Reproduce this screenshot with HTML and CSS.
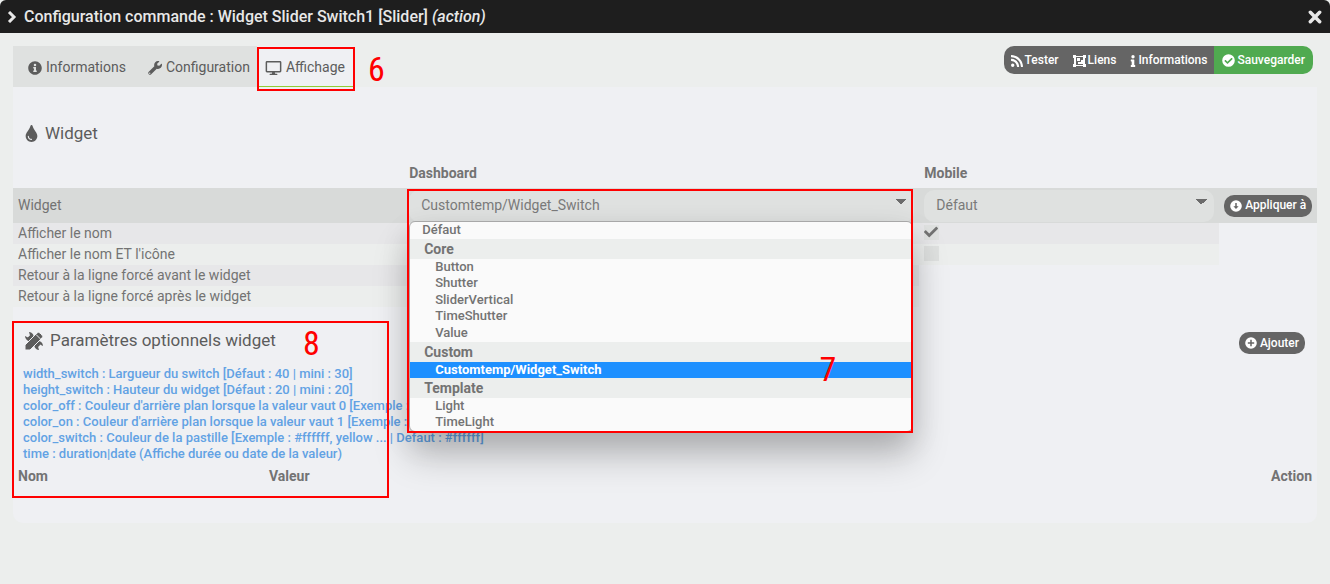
FILE: index.html
```html
<!DOCTYPE html>
<html lang="fr">
<head>
<meta charset="utf-8">
<title>Configuration commande</title>
<link rel="stylesheet" href="styles.css">
</head>
<body>
<svg class="sprite" aria-hidden="true">
  <symbol id="i-info-circle" viewBox="0 0 512 512"><path d="M256 8C119 8 8 119 8 256s111 248 248 248 248-111 248-248S393 8 256 8zm0 90a46 46 0 1 1 0 92 46 46 0 0 1 0-92zm64 294c0 7-5 12-12 12h-104c-7 0-12-5-12-12v-32c0-7 5-12 12-12h16v-76h-16c-7 0-12-5-12-12v-32c0-7 5-12 12-12h76c7 0 12 5 12 12v120h16c7 0 12 5 12 12z"/></symbol>
  <symbol id="i-wrench" viewBox="0 0 512 512"><path d="M508 109c-2-9-14-12-20-5l-75 74-67-11-12-68 75-74c7-7 4-18-6-21-48-12-100 1-137 38-40 40-51 98-34 148L19 404a65 65 0 0 0 89 89l213-213c50 18 108 6 148-34 38-37 51-90 39-137zM64 472a24 24 0 1 1 0-48 24 24 0 0 1 0 48z"/></symbol>
  <symbol id="i-screen" viewBox="0 0 576 512"><path d="M528 0H48C22 0 0 22 0 48v320c0 26 22 48 48 48h192l-16 48h-62c-12 0-20 10-20 24s8 24 20 24h252c12 0 20-10 20-24s-8-24-20-24h-62l-16-48h192c26 0 48-22 48-48V48c0-26-22-48-48-48zm-6 362H54V54h468v308z"/></symbol>
  <symbol id="i-drop" viewBox="0 0 352 512"><path d="M206 22c-9-30-50-30-59 0C100 179 0 222 0 334c0 99 79 178 176 178s176-79 176-178C352 221 252 180 206 22zM176 448c-62 0-112-50-112-112a16 16 0 0 1 32 0c0 44 36 80 80 80a16 16 0 0 1 0 32z"/></symbol>
  <symbol id="i-rss" viewBox="0 0 448 448"><path d="M128 384a64 64 0 1 1-128 0 64 64 0 0 1 128 0zm176 47C295 274 175 153 17 144c-9 0-17 7-17 16v48c0 8 7 15 15 16 111 7 201 95 208 209 1 8 8 15 16 15h49c9 0 16-8 16-17zm144 0C439 198 252 9 17 0 8 0 0 7 0 16v48c0 9 7 16 15 16 190 8 345 161 353 353 0 8 7 15 16 15h48c9 0 16-8 16-17z"/></symbol>
  <symbol id="i-group" viewBox="0 0 13 13"><path fill-rule="evenodd" d="M0 1h3v1h7V1h3v3h-1v6h1v3h-3v-1H3v1H0v-3h1V4H0zm3 2v8h7V3z"/><path d="M4 4h3v3H4zM8 6h2v4H5V8h3z"/></symbol>
  <symbol id="i-info" viewBox="0 0 192 512"><path d="M20 424h20V280H20c-11 0-20-9-20-20v-48c0-11 9-20 20-20h112c11 0 20 9 20 20v212h20c11 0 20 9 20 20v48c0 11-9 20-20 20H20c-11 0-20-9-20-20v-48c0-11 9-20 20-20zM96 0a72 72 0 1 1 0 144A72 72 0 0 1 96 0z"/></symbol>
  <symbol id="i-check-circle" viewBox="0 0 512 512"><path d="M504 256a248 248 0 1 1-496 0 248 248 0 0 1 496 0zM227 387l184-184c7-6 7-16 0-22l-22-23c-7-6-17-6-23 0L216 308l-70-70c-6-6-16-6-23 0l-22 23c-7 6-7 16 0 22l104 104c6 7 16 7 22 0z"/></symbol>
  <symbol id="i-arrow-circle" viewBox="0 0 512 512"><path fill-rule="evenodd" d="M256 8a248 248 0 1 1 0 496 248 248 0 0 1 0-496zM224 130v140h-80l112 116 112-116h-80V130z"/></symbol>
  <symbol id="i-plus-circle" viewBox="0 0 512 512"><path fill-rule="evenodd" d="M256 8a248 248 0 1 1 0 496 248 248 0 0 1 0-496zM224 120v104H120v64h104v104h64V288h104v-64H288V120z"/></symbol>
  <symbol id="i-tools" viewBox="0 0 18 18"><path fill="none" stroke="currentColor" stroke-width="4.400" d="m3.500 5 10 9.500"/><path d="M4 0a4.500 4.500 0 0 1 4.500 5.500L6 9A5 5 0 0 1 0 4l3 1.500L5 3.500zM14 18a4.500 4.500 0 0 1-4.500-5.500L12 9a5 5 0 0 1 6 5l-3-1.500-2 2z"/><path stroke="#eff0f3" stroke-width="1" d="M0 18v-5L12 1q1.500-1.500 3 0l2 2q1.500 1.500 0 3L5 18z"/><path stroke="#eff0f3" stroke-width="1" d="m11 2.500 4.500 4.500"/></symbol>
  <symbol id="i-check" viewBox="0 0 512 512"><path d="m174 439-166-166c-10-10-10-27 0-37l36-36c10-10 26-10 36 0l112 112 240-240c10-10 26-10 36 0l36 37c10 10 10 26 0 36L210 439c-10 10-26 10-36 0z"/></symbol>
  <symbol id="i-chevron" viewBox="0 0 10 12"><path fill="none" stroke="currentColor" stroke-width="3" d="m2 1 5 5-5 5"/></symbol>
  <symbol id="i-close" viewBox="0 0 12 12"><path fill="none" stroke="currentColor" stroke-width="3" stroke-linecap="round" d="m2 2 8 8m0-8-8 8"/></symbol>
</svg>

<header class="titlebar">
  <svg class="icon chevron"><use href="#i-chevron"/></svg>
  <h1 class="title">Configuration commande : Widget Slider Switch1 [Slider] <em>(action)</em></h1>
  <button class="close" type="button" aria-label="Fermer"><svg class="icon"><use href="#i-close"/></svg></button>
</header>

<main class="content">
  <div class="toolbar">
    <nav class="tabs">
      <a class="tab tab-first" href="#informations"><svg class="icon"><use href="#i-info-circle"/></svg>Informations</a>
      <a class="tab" href="#configuration"><svg class="icon"><use href="#i-wrench"/></svg>Configuration</a>
      <a class="tab active" href="#affichage" aria-current="page"><svg class="icon screen"><use href="#i-screen"/></svg>Affichage<span class="mark mark-tab"></span><span class="step step-tab">6</span></a>
    </nav>
    <div class="actions">
      <button class="action" type="button"><svg class="icon"><use href="#i-rss"/></svg>Tester</button>
      <button class="action" type="button"><svg class="icon wide"><use href="#i-group"/></svg>Liens</button>
      <button class="action" type="button"><svg class="icon thin"><use href="#i-info"/></svg>Informations</button>
      <button class="action save" type="button"><svg class="icon wide"><use href="#i-check-circle"/></svg>Sauvegarder</button>
    </div>
  </div>

  <div class="panel" id="affichage">
    <section>
      <h2 class="legend"><svg class="icon drop"><use href="#i-drop"/></svg>Widget</h2>
      <table class="table settings">
        <colgroup><col class="c-name"><col class="c-dash"><col class="c-mobile"><col class="c-apply"></colgroup>
        <thead><tr><th></th><th scope="col">Dashboard</th><th scope="col">Mobile</th><th></th></tr></thead>
        <tbody>
          <tr class="current">
            <td>Widget</td>
            <td class="anchor">
              <select class="select" aria-label="Widget dashboard"><option>Customtemp/Widget_Switch</option></select>
              <div class="popup" role="listbox" aria-label="Choix du widget">
                <div class="option root" role="option">Défaut</div>
                <div class="group" role="group" aria-label="Core">
                  <div class="group-label">Core</div>
                  <div class="options spaced">
                    <div class="option" role="option">Button</div>
                    <div class="option" role="option">Shutter</div>
                    <div class="option" role="option">SliderVertical</div>
                    <div class="option" role="option">TimeShutter</div>
                    <div class="option" role="option">Value</div>
                  </div>
                </div>
                <div class="group" role="group" aria-label="Custom">
                  <div class="group-label">Custom</div>
                  <div class="options">
                    <div class="option selected" role="option" aria-selected="true">Customtemp/Widget_Switch</div>
                  </div>
                </div>
                <div class="group" role="group" aria-label="Template">
                  <div class="group-label">Template</div>
                  <div class="options">
                    <div class="option" role="option">Light</div>
                    <div class="option" role="option">TimeLight</div>
                  </div>
                </div>
                <span class="step step-popup">7</span>
              </div>
              <span class="mark mark-popup"></span>
            </td>
            <td><select class="select" aria-label="Widget mobile"><option>Défaut</option></select></td>
            <td><button class="pill" type="button"><svg class="icon"><use href="#i-arrow-circle"/></svg>Appliquer à</button></td>
          </tr>
          <tr><td class="odd">Afficher le nom</td><td class="odd"></td><td class="odd"><label class="tick"><input type="checkbox" checked aria-label="Afficher le nom"><svg class="icon"><use href="#i-check"/></svg></label></td></tr>
          <tr><td class="even">Afficher le nom ET l'icône</td><td class="even"></td><td class="even"><label class="tick"><input type="checkbox" aria-label="Afficher le nom et l'icône"></label></td></tr>
          <tr><td class="odd">Retour à la ligne forcé avant le widget</td><td class="odd"></td></tr>
          <tr><td class="even">Retour à la ligne forcé après le widget</td><td class="even"></td></tr>
        </tbody>
      </table>
    </section>

    <section class="params">
      <div class="params-head">
        <h2 class="legend"><svg class="icon tools"><use href="#i-tools"/></svg>Paramètres optionnels widget</h2>
        <button class="pill" type="button"><svg class="icon"><use href="#i-plus-circle"/></svg>Ajouter</button>
      </div>
      <ul class="hints">
        <li>width_switch : Largueur du switch [Défaut : 40 | mini : 30]</li>
        <li>height_switch : Hauteur du widget [Défaut : 20 | mini : 20]</li>
        <li>color_off : Couleur d'arrière plan lorsque la valeur vaut 0 [Exemple :</li>
        <li>color_on : Couleur d'arrière plan lorsque la valeur vaut 1 [Exemple :</li>
        <li>color_switch : Couleur de la pastille [Exemple : #ffffff, yellow ... | Defaut : #ffffff]</li>
        <li>time : duration|date (Affiche durée ou date de la valeur)</li>
      </ul>
      <table class="table values">
        <thead><tr><th class="c-key" scope="col">Nom</th><th scope="col">Valeur</th><th class="c-action" scope="col">Action</th></tr></thead>
      </table>
      <span class="mark mark-params"></span>
      <span class="step step-params">8</span>
    </section>
  </div>
</main>
</body>
</html>
```

FILE: styles.css
```css
* { box-sizing: border-box; }

body {
  margin: 0;
  background: #eceeed;
  color: #737373;
  font: 14px/21px Roboto, "Liberation Sans", sans-serif;
}

h1, h2, ul { margin: 0; padding: 0; }

button, select { font: inherit; border: 0; }

.sprite { position: absolute; width: 0; height: 0; }

.icon { width: 12px; height: 12px; fill: currentColor; flex: none; }

.titlebar {
  display: flex;
  align-items: center;
  height: 33px;
  padding: 0 8px 0 7px;
  background: #1e1e1e;
  color: #e8e8e8;
  border-radius: 6px 6px 0 0;
}

.chevron { width: 10px; }

.title { flex: 1; margin-left: 7px; font-size: 16px; font-weight: 500; }

.close {
  display: flex;
  padding: 0;
  background: none;
  color: #e8e8e8;
}

.close .icon { width: 14px; height: 14px; }

.content { padding: 13px 13px 60px; }

.toolbar { display: flex; justify-content: space-between; align-items: flex-start; }

.tabs { display: flex; height: 41px; }

.tab {
  display: flex;
  align-items: center;
  gap: 4px;
  padding: 2px 7px 0;
  background: #dfe1e0;
  color: #5c5c5c;
  text-decoration: none;
}

.tab .icon { width: 14px; height: 14px; }
.tab .screen { width: 17px; height: 14px; }
.tab.tab-first { padding: 2px 15px 0; }

.tab.active {
  position: relative;
  padding: 3px 8px 0;
  background: #eff0f3;
  border-bottom: 1px solid #93cb34;
}

.actions {
  display: flex;
  margin-right: 4px;
  border-radius: 10px;
  overflow: hidden;
}

.action {
  display: flex;
  align-items: center;
  gap: 2px;
  height: 28px;
  padding: 1px 7px 0;
  background: #656565;
  color: #fff;
  font-size: 12px;
  font-weight: 500;
}

.action .wide { width: 13px; height: 13px; }
.action .thin { width: 6px; }
.action.save { padding: 1px 8px 0; background: #50aa50; }

.panel {
  padding: 36px 0 32px;
  background: #eff0f3;
  border-radius: 0 0 10px 10px;
}

.legend {
  display: flex;
  align-items: center;
  gap: 7px;
  padding-left: 12px;
  color: #5c5c5c;
  font-size: 17px;
  font-weight: 400;
}

.drop { width: 13px; height: 17px; }
.tools { width: 18px; height: 18px; }

.table { width: 100%; border-collapse: collapse; table-layout: fixed; }

.table th, .table td { padding: 0 5px; text-align: left; }

.table th { height: 30px; font-weight: 700; }

.settings { margin-top: 14px; }
.settings td { height: 21px; }
.settings .current td { height: 35px; background: #d8dad9; }

.c-name { width: 30%; }
.c-dash { width: 39.5%; }
.c-mobile { width: 23%; }
.c-apply { width: 7.5%; }

.table .odd { background: #e7e7e9; }
.table .even { background: #eceeed; }

.select {
  display: block;
  width: 100%;
  height: 32px;
  padding: 0 12px;
  appearance: none;
  border-radius: 10px;
  color: #7a7a7a;
  background: conic-gradient(from -45deg at 50% 100%, #6b6b6b 90deg, transparent 0) no-repeat right 7px top 9px / 12px 6px, #dfe1e0;
}

.anchor { position: relative; }

.popup {
  position: absolute;
  z-index: 2;
  top: 33px;
  left: 5px;
  right: 6px;
  border: 1px solid #a8a8a8;
  border-radius: 6px;
  background: #fafafa;
  box-shadow: 0 24px 36px rgba(0, 0, 0, .22), 0 10px 30px rgba(0, 0, 0, .1);
  font-size: 13px;
  font-weight: 500;
}

.option { height: 16px; padding-left: 25px; line-height: 16px; }
.options .option:nth-child(even) { height: 17px; }
.option.root { height: 17px; padding-left: 12px; }
.option.selected { background: #1e90ff; color: #fff; font-weight: 700; }
.options.spaced { padding-bottom: 1px; }

.group-label {
  height: 20px;
  padding-left: 14px;
  background: #eceeed;
  font-size: 14px;
  font-weight: 700;
  line-height: 20px;
}

.pill {
  display: flex;
  align-items: center;
  gap: 3px;
  height: 22px;
  padding: 0 6px;
  border-radius: 10px;
  background: #656565;
  color: #fff;
  font-size: 12px;
  font-weight: 500;
  white-space: nowrap;
}

.tick { display: block; position: relative; width: 15px; height: 15px; margin-bottom: 2px; }

.tick input {
  display: block;
  width: 15px;
  height: 15px;
  margin: 0;
  appearance: none;
  background: #dfe1e0;
}

.tick .icon { position: absolute; top: 0; left: 0; width: 14px; height: 14px; }

.params { position: relative; margin-top: 23px; }

.params-head {
  display: flex;
  align-items: flex-start;
  justify-content: space-between;
  padding-right: 12px;
}

.params-head .pill { margin-top: 2px; }

.hints {
  margin-top: 12px;
  padding-left: 10px;
  color: #62a2e4;
  font-size: 13px;
  font-weight: 500;
  line-height: 16px;
  list-style: none;
  white-space: nowrap;
}

.values th { height: 29px; }
.values .c-key { width: 251px; }
.values .c-action { width: 80px; text-align: right; }

.mark {
  position: absolute;
  z-index: 3;
  border: 2px solid #f00;
  pointer-events: none;
}

.mark-tab { inset: 1px -2px -5px 0; }
.mark-popup { top: 1px; left: 3px; right: 6px; height: 244px; }
.mark-params { top: -9px; left: -1px; width: 377px; height: 177px; }

.step {
  position: absolute;
  z-index: 4;
  color: #f00;
  font: 34px/34px "Liberation Sans Narrow", "Roboto Condensed", "Open Sans Condensed", "DejaVu Sans Condensed", sans-serif;
}

.step-tab { top: 6px; left: 111px; }
.step-popup { right: 76px; bottom: 45px; }
.step-params { top: -4px; left: 290px; }
```
